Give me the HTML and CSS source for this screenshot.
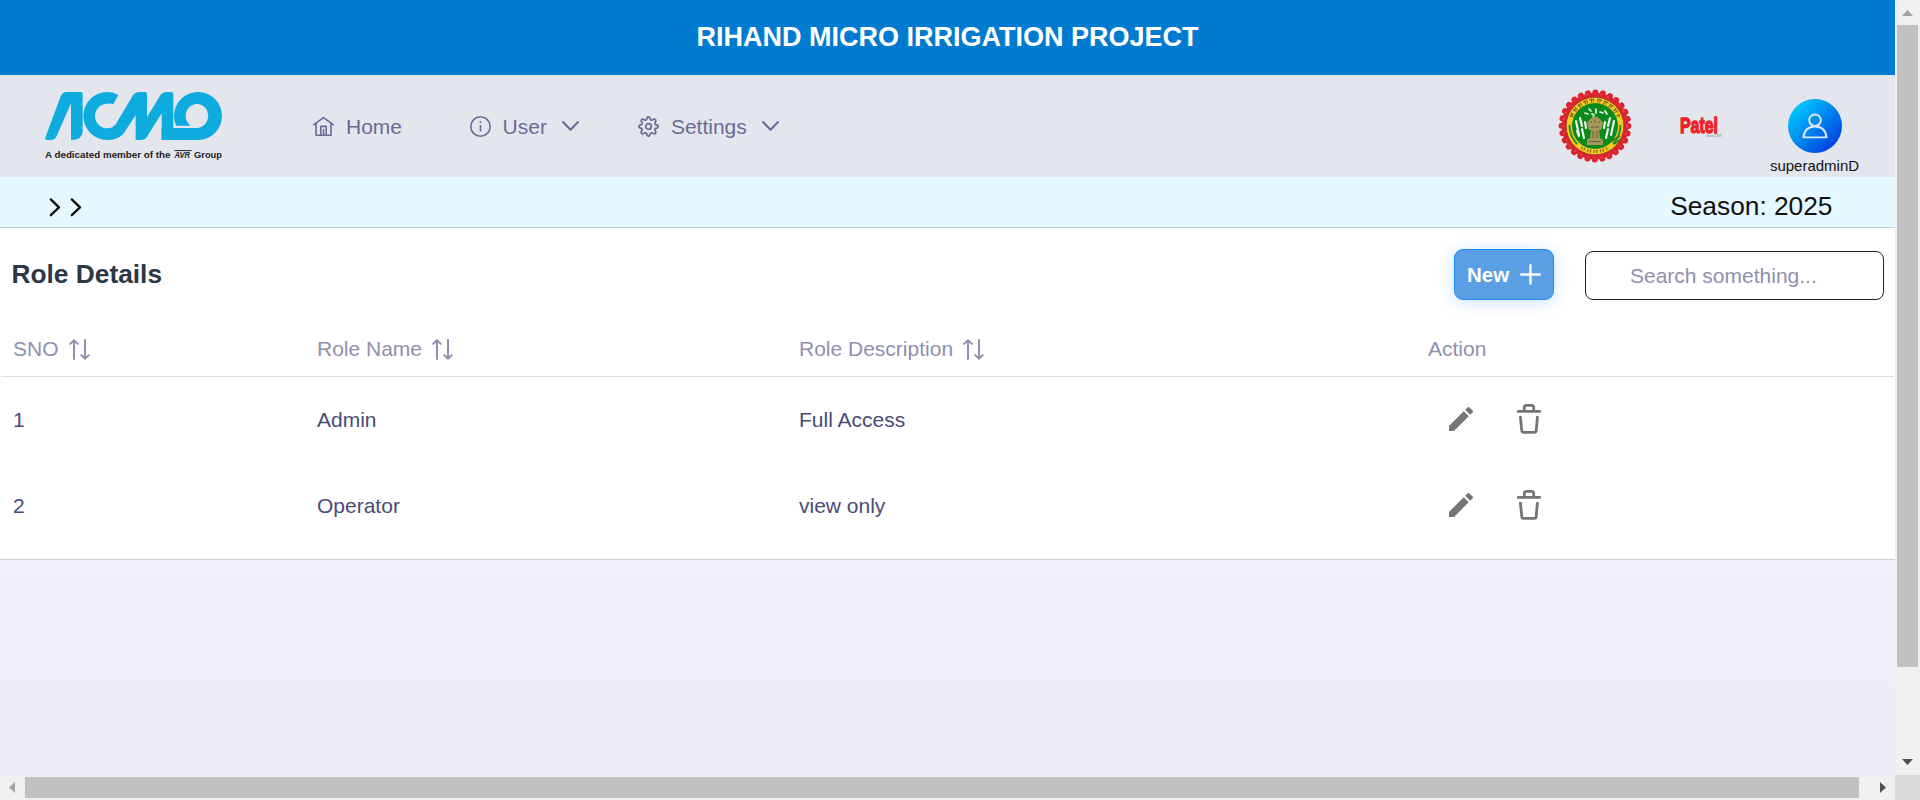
FILE: index.html
```html
<!DOCTYPE html>
<html lang="en">
<head>
<meta charset="utf-8">
<title>Role Details</title>
<link rel="stylesheet" href="styles.css">
</head>
<body>
<svg class="defs" width="0" height="0" aria-hidden="true">
  <symbol id="chev-down" viewBox="0 0 21 21"><path d="M3 6l7.5 7.7L18 6" fill="none" stroke="currentColor" stroke-width="2" stroke-linecap="round" stroke-linejoin="round"/></symbol>
  <symbol id="chev-right" viewBox="0 0 12 20"><path d="M1.8 2.4L10 10.4 1.8 18.2" fill="none" stroke="currentColor" stroke-width="2.3" stroke-linecap="round" stroke-linejoin="round"/></symbol>
  <symbol id="sort" viewBox="0 0 21 21"><path d="M5 20V1.4M1.2 4.9L5 1.2l3.8 3.7M16 1v18.8M12.2 16.1l3.8 3.7 3.8-3.7" fill="none" stroke="currentColor" stroke-width="2" stroke-linecap="round" stroke-linejoin="round"/></symbol>
  <symbol id="pencil" viewBox="3 3 18 18"><path d="M3 17.25V21h3.75L17.81 9.94l-3.75-3.75L3 17.25zM20.71 7.04a1 1 0 0 0 0-1.41l-2.34-2.34a1 1 0 0 0-1.41 0l-1.83 1.83 3.75 3.75 1.83-1.83z" fill="currentColor"/></symbol>
  <symbol id="trash" viewBox="0 0 24 30"><path d="M1.2 7.4h21.6M7.3 7V3.6Q7.3 1.4 9.5 1.4h5Q16.7 1.4 16.7 3.6V7M3.4 13.2L4.8 26.6Q5 28.4 6.6 28.4H17.4Q19 28.4 19.2 26.6L20.4 13.2" fill="none" stroke="currentColor" stroke-width="2.8" stroke-linecap="round"/></symbol>
</svg>
<div class="window">
  <div class="page">
    <header class="banner">RIHAND MICRO IRRIGATION PROJECT</header>
    <nav class="nav">
      <svg class="logo" viewBox="0 0 177 69" role="img" aria-label="ACMO">
        <g transform="scale(.3333) translate(-135 -96)" fill="#0eabdf">
          <path d="M137 230L182 109Q187 96 201 96H242Q248 96 248 102V215Q247 240 213 240V130L170 228Q165 240 152 240H142Q132 240 137 230Z"/>
          <path d="M340 132L355 105Q340 96 322 96A72 72 0 0 0 322 240Q351 240 370 222L407 165V240H421Q435 240 441 230L485 160V240H520V103Q520 96 513 96H502Q487 96 480 107L441 172V102Q441 96 435 96H419Q405 96 398 107L350 188Q340 205 322 205A37 37 0 0 1 322 131Q332 129 340 132Z"/>
          <path d="M529 197Q522 185 522 168A72 72 0 0 1 594 96A72 72 0 0 1 594 240H485V204H594A37 37 0 0 0 594 131A37 37 0 0 0 557 168Q557 185 572 197Z"/>
        </g>
        <g class="tagline">
          <text x="0" y="66.3" textLength="125.5" lengthAdjust="spacingAndGlyphs">A dedicated member of the</text>
          <text x="129.5" y="66.3" font-style="italic" textLength="15.5" lengthAdjust="spacingAndGlyphs">AVR</text>
          <text x="149" y="66.3" textLength="28" lengthAdjust="spacingAndGlyphs">Group</text>
        </g>
        <path d="M129.5 58.6h17" stroke="#222" stroke-width="1"/>
      </svg>
      <ul class="menu">
        <li class="menu-item">
          <svg class="icon" viewBox="0 0 21 21"><path d="M.8 8.6L10.5 1.6l9.7 7M3 7.6v11.7h15V7.6M7.8 19v-8.6h5.4V19M10.5 19v-5.5" fill="none" stroke="currentColor" stroke-width="1.6" stroke-linecap="round" stroke-linejoin="round"/></svg>
          <span>Home</span>
        </li>
        <li class="menu-item">
          <svg class="icon" viewBox="0 0 21 21"><circle cx="10.5" cy="10.5" r="9.7" fill="none" stroke="currentColor" stroke-width="1.6"/><path d="M10.5 9v6.5M10.5 5.3v1.6" stroke="currentColor" stroke-width="1.6"/></svg>
          <span>User</span>
          <svg class="icon caret"><use href="#chev-down"/></svg>
        </li>
        <li class="menu-item">
          <svg class="icon" viewBox="0 0 21 21"><path d="M8.6 3.6Q9 .9 10.5.9T12.4 3.6Q13 4.5 14.1 4.1 16.3 2.6 17.4 3.6T16.9 6.9Q16.5 8 17.4 8.6 20.1 9 20.1 10.5T17.4 12.4Q16.5 13 16.9 14.1 18.4 16.3 17.4 17.4T14.1 16.9Q13 16.5 12.4 17.4 12 20.1 10.5 20.1T8.6 17.4Q8 16.5 6.9 16.9 4.7 18.4 3.6 17.4T4.1 14.1Q4.5 13 3.6 12.4.9 12 .9 10.5T3.6 8.6Q4.5 8 4.1 6.9 2.6 4.7 3.6 3.6T6.9 4.1Q8 4.5 8.6 3.6Z" fill="none" stroke="currentColor" stroke-width="1.7" stroke-linejoin="round"/><circle cx="10.5" cy="10.5" r="2.8" fill="none" stroke="currentColor" stroke-width="1.7"/></svg>
          <span>Settings</span>
          <svg class="icon caret"><use href="#chev-down"/></svg>
        </li>
      </ul>
      <svg class="emblem" viewBox="-37 -37 74 74">
        <circle r="33.4" fill="#dc2430"/>
        <circle r="33.4" fill="none" stroke="#dc2430" stroke-width="6" stroke-linecap="round" stroke-dasharray="0.1 7.4"/>
        <circle r="32" fill="none" stroke="#e9706f" stroke-width="1" stroke-dasharray="1.4 5.7"/>
        <circle r="28.8" fill="#f5cd22" stroke="#7b3a1c" stroke-width=".7"/>
        <path d="M-23.6-9.5A25.4 25.4 0 0 1 23.6-9.5" fill="none" stroke="#80591b" stroke-width="4" stroke-dasharray="1.2 1.2 .9 3.2"/>
        <path d="M-24.4-7.5A25.5 25.5 0 0 1-1.5-25.4M3-25.3A25.5 25.5 0 0 1 24.4-7.5" fill="none" stroke="#80591b" stroke-width="1" stroke-dasharray="4.4 2.2" transform="translate(0 -1.2)"/>
        <path d="M-13.5 21.6A25.4 25.4 0 0 0 13.5 21.6" fill="none" stroke="#8d6a18" stroke-width="3" stroke-dasharray="1.2 1.4 1.4 2.4"/>
        <path d="M-25.5-1Q-25.5 10-18 18M25.5-1Q25.5 10 18 18" fill="none" stroke="#2f8a2a" stroke-width="2"/>
        <circle r="23" fill="#0b8a1c"/>
        <g fill="none" stroke="#e9f1ec" stroke-width="2.2" stroke-linecap="round">
          <path d="M-19-5l3 14M-15-8l2 8M-13 3l2 9M19-5l-3 14M15-8l-2 8M13 3l-2 9M-18 5l2 5M10-4l-1 6M-10-4l1 6"/>
          <path d="M-10-13l3 1M-6-17l2 2M-3-12l2 1M1-17v4M5-14l3 1M10-15l2 3M-2-9l2 1" stroke-width="1.7"/>
        </g>
        <path d="M-5-7Q0-12 5-7L8-3 6 4H4L5 12 8 14V19H-8V14L-5 12-4 4H-6L-8-3Z" fill="#a6985a"/>
        <path d="M-5-4h2M-1-5h2M3-4h2M-4 1h8M-2 5v7M2 5v7M-6 15.5H6" stroke="#6c6136" stroke-width="1.1"/>
        <path d="M17 15l8-5M19 18l7-5" stroke="#347c25" stroke-width="1.8"/>
      </svg>
      <svg class="patel" viewBox="0 0 44 26">
        <text class="patel-name" x="1" y="19.4" textLength="38" lengthAdjust="spacingAndGlyphs">Patel</text>
        <text class="patel-since" x="27.5" y="23.4" textLength="15" lengthAdjust="spacingAndGlyphs">Since 1949</text>
      </svg>
      <div class="account">
        <div class="avatar">
          <svg viewBox="0 0 30 30"><circle cx="15" cy="8.8" r="6.2" fill="none" stroke="#dbe9fb" stroke-width="2.1"/><path d="M2.6 27.2Q4 15.5 15 15.5T27.4 27.2Z" fill="none" stroke="#dbe9fb" stroke-width="2.1" stroke-linejoin="round"/></svg>
        </div>
        <span>superadminD</span>
      </div>
    </nav>
    <div class="crumbs">
      <div class="crumb-arrows"><svg><use href="#chev-right"/></svg><svg><use href="#chev-right"/></svg></div>
      <div class="season">Season: 2025</div>
    </div>
    <section class="card">
      <div class="toolbar">
        <h1>Role Details</h1>
        <button class="new" type="button">New <svg viewBox="0 0 21 21"><path d="M10.5 1.2v18.6M1.2 10.5h18.6" stroke="currentColor" stroke-width="2.3" stroke-linecap="round"/></svg></button>
        <input class="search" type="text" placeholder="Search something...">
      </div>
      <div class="table">
        <div class="row head">
          <div>SNO <svg class="sort"><use href="#sort"/></svg></div>
          <div>Role Name <svg class="sort"><use href="#sort"/></svg></div>
          <div>Role Description <svg class="sort"><use href="#sort"/></svg></div>
          <div>Action</div>
        </div>
        <div class="row">
          <div>1</div><div>Admin</div><div>Full Access</div>
          <div class="actions"><svg class="pencil"><use href="#pencil"/></svg><svg class="trash"><use href="#trash"/></svg></div>
        </div>
        <div class="row">
          <div>2</div><div>Operator</div><div>view only</div>
          <div class="actions"><svg class="pencil"><use href="#pencil"/></svg><svg class="trash"><use href="#trash"/></svg></div>
        </div>
      </div>
    </section>
  </div>
  <div class="vbar">
    <svg class="arrow" viewBox="0 0 25 25"><path d="M7 16L12.5 10 18 16Z" fill="#a3a3a3"/></svg>
    <div class="vthumb"></div>
    <svg class="arrow end" viewBox="0 0 25 25"><path d="M7 9L12.5 15 18 9Z" fill="#505050"/></svg>
  </div>
  <div class="hbar">
    <svg class="arrow" viewBox="0 0 25 25"><path d="M15 7L9 12.5 15 18Z" fill="#a3a3a3"/></svg>
    <div class="hthumb"></div>
    <svg class="arrow end" viewBox="0 0 25 25"><path d="M10 7L16 12.5 10 18Z" fill="#505050"/></svg>
  </div>
  <div class="corner"></div>
</div>
</body>
</html>
```
FILE: styles.css
```css
* { box-sizing: border-box; }

body {
  margin: 0;
  font-family: "Liberation Sans", Arial, sans-serif;
  font-size: 21px;
  overflow: hidden;
}

svg { display: block; flex: none; }
.defs { position: absolute; }

.window {
  display: grid;
  grid-template: 775px 25px / 1895px 25px;
  width: 1920px;
  height: 800px;
}

.page { background: linear-gradient(#f1f1fb 0, #f0f0fa 560px, #ebebf7 775px); }

.banner {
  height: 75px;
  padding-top: 21px;
  background: #007bd0;
  color: #fff;
  font-size: 27px;
  font-weight: 700;
  line-height: 33px;
  text-align: center;
}

.nav {
  display: flex;
  align-items: flex-start;
  height: 102px;
  padding-left: 45px;
  background: #e4e6ee;
}

.logo { width: 177px; height: 69px; margin-top: 17px; }
.tagline { fill: #222; font-size: 9px; font-weight: 700; }

.menu {
  display: flex;
  gap: 56.5px;
  height: 102px;
  margin: 0 0 0 91px;
  padding: 0;
  list-style: none;
  color: #6b6c93;
}

.menu-item { display: flex; align-items: center; gap: 12px; }
.menu-item:first-child { margin-right: 11px; }
.menu-item span { padding-top: 1px; }
.icon { width: 21px; height: 21px; }
.caret { margin-left: 1.5px; }

.emblem { width: 74px; height: 74px; margin: 14px 0 0 auto; }

.patel { width: 44px; height: 26px; margin: 39px 0 0 47px; overflow: visible; }
.patel-name { fill: #ed2228; stroke: #ed2228; stroke-width: 1.3; font-size: 22px; font-weight: 700; }
.patel-since { fill: #777; font-size: 3.5px; }

.account {
  display: flex;
  flex-direction: column;
  align-items: center;
  width: 90px;
  margin: 24px 35.5px 0 46.5px;
  color: #111;
  font-size: 15px;
  line-height: 18px;
}

.avatar {
  display: flex;
  align-items: center;
  justify-content: center;
  width: 54px;
  height: 54px;
  margin-bottom: 4px;
  border-radius: 50%;
  background: linear-gradient(135deg, #00d2ff 8%, #0038df 92%);
}
.avatar svg { width: 28px; height: 28px; }

.crumbs {
  display: flex;
  justify-content: space-between;
  height: 50px;
  padding: 0 62.5px 0 49px;
  background: #e5f7ff;
  color: #111;
}

.crumb-arrows { display: flex; gap: 9px; padding-top: 20px; }
.crumb-arrows svg { width: 12px; height: 20px; }
.season { padding-top: 14px; font-size: 26.3px; line-height: 30px; }

.card {
  height: 333px;
  border: solid #d0d0d4;
  border-width: 1px 0;
  background: #fff;
}

.toolbar { display: flex; align-items: flex-start; height: 93px; padding: 21px 11px 0 11.5px; }

h1 {
  margin: 10px auto 0 0;
  color: #2b3844;
  font-size: 26.3px;
  line-height: 30px;
}

.new {
  display: flex;
  align-items: center;
  justify-content: space-between;
  width: 100px;
  height: 51px;
  padding: 0 12.5px 0 12px;
  border: 1px solid #1a8cff;
  border-radius: 9px;
  background: #5a9ee3;
  box-shadow: 0 2px 16px rgba(26, 140, 255, .24);
  color: #fff;
  font: 700 20.5px "Liberation Sans", Arial, sans-serif;
}
.new svg { width: 21px; height: 21px; }

.search {
  width: 299px;
  height: 49px;
  margin: 2px 0 0 31px;
  padding: 0 12px 0 44px;
  border: 1px solid #222;
  border-radius: 8px;
  background: #fff;
  font: 21px "Liberation Sans", Arial, sans-serif;
}
.search::placeholder { color: #8f90ac; opacity: 1; }

.table { margin: 0 1px; }

.row {
  display: grid;
  grid-template-columns: 304px 482px 629px 1fr;
  align-items: center;
  height: 86px;
  padding-left: 12px;
  color: #4a4b74;
}
.row > div { display: flex; align-items: center; }

.head { height: 56px; border-bottom: 1px solid #dcdde3; color: #8f90ac; }
.sort { width: 21px; height: 21px; margin: 2px 0 0 10px; }

.actions { gap: 44px; margin-top: -2px; padding-left: 21px; color: #757575; }
.pencil { width: 24px; height: 24px; }
.trash { width: 24px; height: 30px; }

.vbar, .hbar { display: flex; background: #f0f0f0; }
.vbar { flex-direction: column; align-items: center; }
.hbar { align-items: center; }
.arrow { width: 25px; height: 25px; }
.end { margin-top: auto; }
.hbar .end { margin: 0 0 0 auto; }
.vthumb { width: 21px; height: 642px; background: #c1c1c1; }
.hthumb { width: 1834px; height: 21px; background: #c1c1c1; }
.corner { background: #dbdbdb; }
```
